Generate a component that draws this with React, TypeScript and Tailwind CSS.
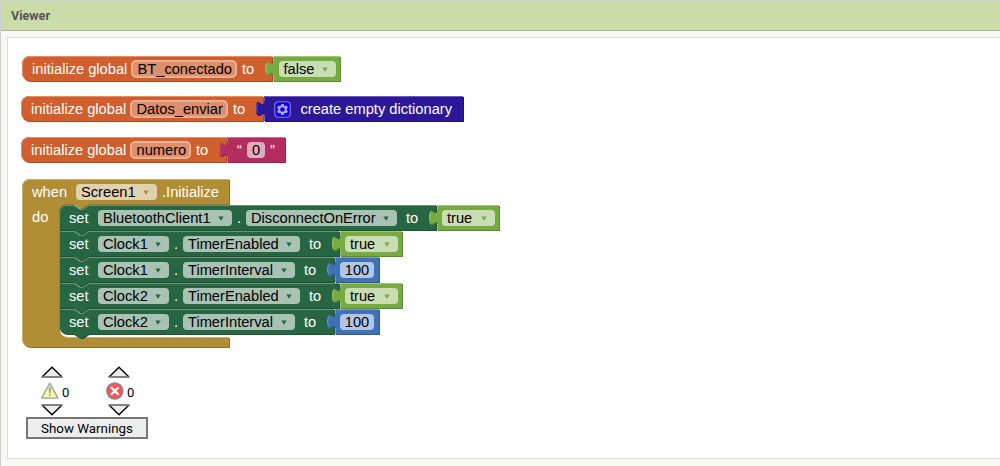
import type { ReactNode } from 'react';

type Tone = { main: string; light: string; dark: string };

const ORANGE: Tone = { main: '#d05f2d', light: '#de8f6c', dark: '#a64c24' };
const GREEN: Tone = { main: '#77ab41', light: '#a0c47a', dark: '#5f8934' };
const INDIGO: Tone = { main: '#2d1799', light: '#6c5db8', dark: '#24127a' };
const PINK: Tone = { main: '#b32d5e', light: '#ca6c8e', dark: '#8f244b' };
const GOLD: Tone = { main: '#b18e35', light: '#c8b072', dark: '#8e722a' };
const FOREST: Tone = { main: '#266643', light: '#67947b', dark: '#1e5236' };
const BLUE: Tone = { main: '#3f71b5', light: '#799ccb', dark: '#325a91' };

function Outline({ d, edge, tone }: { d: string; edge: string; tone: Tone }) {
  return (
    <svg className="pointer-events-none absolute left-0 top-0 overflow-visible" width="1" height="1">
      <path d={d} fill={tone.dark} transform="translate(1,1)" />
      <path d={d} fill={tone.main} />
      <path d={edge} fill="none" stroke={tone.light} strokeWidth="1" />
    </svg>
  );
}

function Label({ children, className = '' }: { children: ReactNode; className?: string }) {
  return <span className={`relative whitespace-pre text-white ${className}`}>{children}</span>;
}

function Dropdown({ text, tone, className }: { text: string; tone: Tone; className: string }) {
  return (
    <span className={`relative flex h-4 shrink-0 items-center justify-between rounded bg-white/60 pl-[5px] pr-2 text-black ${className}`}>
      <span className="leading-4">{text}</span>
      <svg width="6" height="5" viewBox="0 0 6 5">
        <path d="M0.3 0.5H5.7L3 4.8Z" fill={tone.main} />
      </svg>
    </span>
  );
}

function NameField({ text, className }: { text: string; className: string }) {
  return (
    <span className={`relative flex h-[18px] shrink-0 items-center rounded-[5px] border-2 border-[#e9af96] bg-[#de8f6c] pl-[4.5px] text-black ${className}`}>
      <span className="leading-4">{text}</span>
    </span>
  );
}

function Value({ width, tone, children }: { width: number; tone: Tone; children: ReactNode }) {
  const tab = 'V20 c0,-10 -8,8 -8,-7.5 s8,2.5 8,-7.5';
  return (
    <div className="relative flex h-[26px] shrink-0 items-center" style={{ width }}>
      <Outline
        tone={tone}
        d={`M0,0 H${width - 1} V25 H0 ${tab} Z`}
        edge={`M${width - 1},0.5 H0.5 V5 M0.5,19 V24.5 M-5.6,8 c-2.2,0.6 -2.2,7.4 -0.6,8.4`}
      />
      {children}
    </div>
  );
}

function BoolValue({ text }: { text: string }) {
  return (
    <Value width={text === 'true' ? 63 : 68} tone={GREEN}>
      <Dropdown text={text} tone={GREEN} className={text === 'true' ? 'ml-[5px] w-[53px]' : 'ml-[5.5px] w-[57px]'} />
    </Value>
  );
}

function NumberValue({ text }: { text: string }) {
  return (
    <Value width={45} tone={BLUE}>
      <span className="relative ml-[5px] flex h-4 w-[34px] items-center justify-center rounded bg-white/60 leading-4 text-black">{text}</span>
    </Value>
  );
}

function GlobalBlock({ name, width, fieldClass, className, children }: { name: string; width: number; fieldClass: string; className: string; children: ReactNode }) {
  return (
    <div className={`absolute flex h-[26px] ${className}`}>
      <div className="relative flex shrink-0 items-center" style={{ width }}>
        <Outline
          tone={ORANGE}
          d={`M0,8 A8,8 0 0 1 8,0 H${width - 1} V25 H8 A8,8 0 0 1 0,17 Z`}
          edge={`M2.5,22.5 A7.5,7.5 0 0 1 0.5,17 V8 A7.5,7.5 0 0 1 8,0.5 H${width - 1}`}
        />
        <Label className="ml-[10px] w-[99px] shrink-0">initialize global</Label>
        <NameField text={name} className={fieldClass} />
        <Label className="ml-[5px]">to</Label>
      </div>
      {children}
    </div>
  );
}

type Setter = {
  component: string;
  property: string;
  value: string;
  width: number;
  componentClass: string;
  propertyClass: string;
};

const SETTERS: Setter[] = [
  { component: 'BluetoothClient1', property: 'DisconnectOnError', value: 'true', width: 378, componentClass: 'w-[134px]', propertyClass: 'w-[151px]' },
  { component: 'Clock1', property: 'TimerEnabled', value: 'true', width: 281, componentClass: 'w-[71px]', propertyClass: 'w-[117px]' },
  { component: 'Clock1', property: 'TimerInterval', value: '100', width: 276, componentClass: 'w-[71px]', propertyClass: 'w-[112px]' },
  { component: 'Clock2', property: 'TimerEnabled', value: 'true', width: 281, componentClass: 'w-[71px]', propertyClass: 'w-[117px]' },
  { component: 'Clock2', property: 'TimerInterval', value: '100', width: 276, componentClass: 'w-[71px]', propertyClass: 'w-[112px]' },
];

function SetterBlock({ setter, first, last }: { setter: Setter; first: boolean; last: boolean }) {
  const w = setter.width;
  const start = first ? 'M0,8 A8,8 0 0 1 8,0' : 'M0,0';
  const end = last ? 'H8 A8,8 0 0 1 0,17' : 'H0';
  const edgeStart = first ? 'M0.5,25 V8 A7.5,7.5 0 0 1 8,0.5' : last ? 'M2.5,22.5 A7.5,7.5 0 0 1 0.5,17 V0.5' : 'M0.5,25 V0.5';
  return (
    <div className="flex h-[26px]">
      <div className="relative flex shrink-0 items-center" style={{ width: w }}>
        <Outline
          tone={FOREST}
          d={`${start} H15 l6,4 3,0 6,-4 H${w - 1} V25 H29.5 l-6,4 -3,0 -6,-4 ${end} Z`}
          edge={`${edgeStart} H15 l6,4 3,0 6,-4 H${w - 1}`}
        />
        <Label className="ml-[10px] w-[29px] shrink-0">set</Label>
        <Dropdown text={setter.component} tone={FOREST} className={setter.componentClass} />
        <Label className="w-[14px] shrink-0 pl-[5px]">.</Label>
        <Dropdown text={setter.property} tone={FOREST} className={setter.propertyClass} />
        <Label className="ml-[9px]">to</Label>
      </div>
      {setter.value === 'true' ? <BoolValue text="true" /> : <NumberValue text={setter.value} />}
    </div>
  );
}

function EventBlock() {
  return (
    <div className="absolute left-[14px] top-[141px] h-[169px]">
      <Outline
        tone={GOLD}
        d="M0,8 A8,8 0 0 1 8,0 H207 V25 H67 l-6,4 -3,0 -6,-4 H45 a8,8 0 0 0 -8,8 V150 a8,8 0 0 0 8,8 H207 V168 H8 A8,8 0 0 1 0,160 Z"
        edge="M2.5,165.5 A7.5,7.5 0 0 1 0.5,160 V8 A7.5,7.5 0 0 1 8,0.5 H207 M39.5,155.5 A8,8 0 0 0 45,158.5 H207"
      />
      <div className="flex h-[26px] items-center">
        <Label className="ml-[10px] w-[44px] shrink-0">when</Label>
        <Dropdown text="Screen1" tone={GOLD} className="w-[81px]" />
        <Label className="ml-[5px]">.Initialize</Label>
      </div>
      <div className="flex">
        <Label className="w-[37px] shrink-0 pl-[10px] leading-[24px]">do</Label>
        <div className="flex flex-col">
          {SETTERS.map((setter, i) => (
            <SetterBlock key={i} setter={setter} first={i === 0} last={i === SETTERS.length - 1} />
          ))}
        </div>
      </div>
    </div>
  );
}

function Gear() {
  return (
    <svg className="relative ml-[9.5px] shrink-0" width="17" height="17" viewBox="0 0 17 17">
      <rect x="0.75" y="0.75" width="15.5" height="15.5" rx="3.5" fill="#0d00e0" stroke="#8175d8" strokeWidth="1.2" />
      <g fill="#b0a8e4">
        {[0, 60, 120].map((angle) => (
          <rect key={angle} x="7.1" y="3" width="2.8" height="11" transform={`rotate(${angle} 8.5 8.5)`} />
        ))}
        <circle cx="8.5" cy="8.5" r="4.2" />
      </g>
      <circle cx="8.5" cy="8.5" r="2.3" fill="#0d00e0" />
    </svg>
  );
}

function Arrow({ down = false }: { down?: boolean }) {
  return (
    <svg className="block" width="22" height="12" viewBox="0 0 22 12">
      <path d={down ? 'M1 1H21L11 10.7Z' : 'M1 11H21L11 1.3Z'} fill="#ececec" />
      <path d={down ? 'M1 1L11 10.7L21 1' : 'M1 11L11 1.3L21 11'} fill="none" stroke="#000" strokeWidth="1.4" />
      <path d={down ? 'M0.5 1H21.5' : 'M0.5 11H21.5'} stroke="#777" strokeWidth="1.8" />
    </svg>
  );
}

function Indicator({ icon, className }: { icon: ReactNode; className: string }) {
  return (
    <div className={`flex flex-col ${className}`}>
      <div className="ml-[3px]"><Arrow /></div>
      <div className="flex h-[26px] items-center">
        {icon}
        <span className="ml-[3px] pt-1 font-[family-name:Roboto,sans-serif] text-[13px] leading-4 text-black">0</span>
      </div>
      <div className="ml-[3px]"><Arrow down /></div>
    </div>
  );
}

function Warnings() {
  return (
    <div className="absolute left-[18px] top-[328px] w-[122px]">
      <div className="flex pl-3">
        <Indicator
          className="w-[65px]"
          icon={
            <svg className="ml-[2px]" width="19" height="18" viewBox="0 0 19 18">
              <path d="M9.8 1.2L17.9 16H1.7Z" fill="#ffff9c" stroke="#aaa" strokeWidth="1.6" strokeLinejoin="round" />
              <path d="M8.9 5.4H10.7L10.4 11H9.2Z" fill="#999" stroke="#999" strokeWidth="0.4" />
              <rect x="8.9" y="12.1" width="1.8" height="1.8" fill="#999" />
            </svg>
          }
        />
        <Indicator
          className="ml-[2px]"
          icon={
            <svg width="19" height="18" viewBox="0 0 19 18">
              <circle cx="9.8" cy="9" r="8" fill="#fa5558" stroke="#868686" strokeWidth="1.4" />
              <path d="M6 5.2L13.6 12.8M13.6 5.2L6 12.8" stroke="#fff" strokeWidth="2.3" />
            </svg>
          }
        />
      </div>
      <button className="mt-px flex h-[22px] w-[122px] items-center justify-center border-2 border-[#777] bg-[#eee] pt-[2px] font-[family-name:Roboto,sans-serif] text-[13.33px] font-normal leading-4 text-black">
        Show Warnings
      </button>
    </div>
  );
}

export default function App() {
  return (
    <div className="flex h-[466px] w-[1000px] flex-col overflow-hidden border-l border-t border-[#cfcfcf] bg-[#f8f9f2]">
      <header className="flex h-[30px] shrink-0 items-center border-b border-[#adb0a2] bg-[#cbdca8] pl-[10px] pt-[2px] font-[family-name:Roboto,sans-serif] text-[12.6px] font-bold text-[#555]">
        Viewer
      </header>
      <main className="relative ml-[6px] mt-[6px] h-[422px] border border-r-0 border-[#ddd] bg-white font-['Liberation_Sans',Arial,sans-serif] text-[14.667px] leading-[26px]">
        <GlobalBlock name="BT_conectado" width={251} fieldClass="w-[106px]" className="left-[14px] top-[18px]">
          <BoolValue text="false" />
        </GlobalBlock>
        <GlobalBlock name="Datos_enviar" width={243} fieldClass="w-[98px]" className="left-[13px] top-[58px]">
          <Value width={200} tone={INDIGO}>
            <Gear />
            <Label className="ml-[10px]">create empty dictionary</Label>
          </Value>
        </GlobalBlock>
        <GlobalBlock name="numero" width={206} fieldClass="w-[61px]" className="left-[13px] top-[99px]">
          <Value width={59} tone={PINK}>
            <Label className="ml-[10px] w-[10px] shrink-0">“</Label>
            <span className="relative flex h-4 w-[18px] items-center justify-center rounded bg-white/60 leading-4 text-black">0</span>
            <Label className="ml-[5px]">”</Label>
          </Value>
        </GlobalBlock>
        <EventBlock />
        <Warnings />
      </main>
    </div>
  );
}
